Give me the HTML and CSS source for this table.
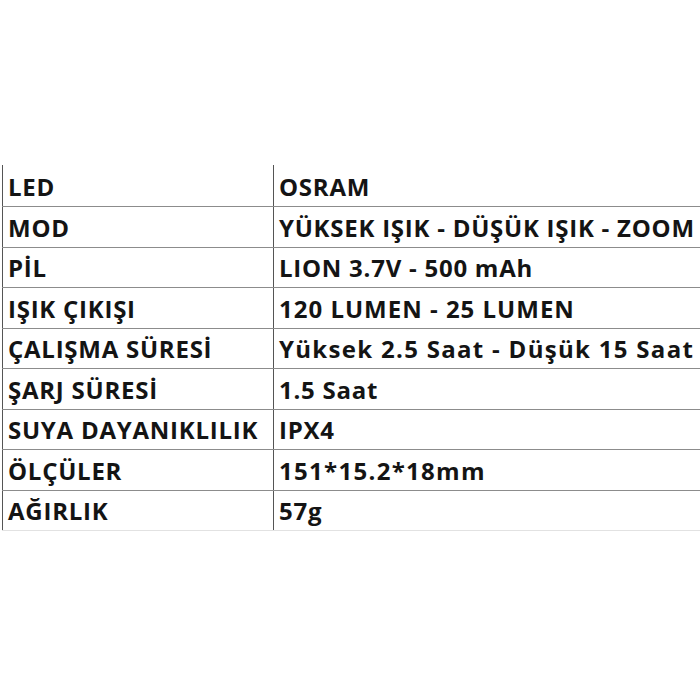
FILE: index.html
```html
<!DOCTYPE html>
<html>
<head>
<meta charset="utf-8">
<link rel="stylesheet" href="styles.css">
</head>
<body>
<table class="spec">
<tr><td class="k">LED</td><td class="v">OSRAM</td></tr>
<tr><td class="k">MOD</td><td class="v">YÜKSEK IŞIK - DÜŞÜK IŞIK - ZOOM</td></tr>
<tr><td class="k">PİL</td><td class="v">LION 3.7V - 500 mAh</td></tr>
<tr><td class="k">IŞIK ÇIKIŞI</td><td class="v wide">120 LUMEN - 25 LUMEN</td></tr>
<tr><td class="k">ÇALIŞMA SÜRESİ</td><td class="v lower">Yüksek 2.5 Saat - Düşük 15 Saat</td></tr>
<tr><td class="k">ŞARJ SÜRESİ</td><td class="v">1.5 Saat</td></tr>
<tr><td class="k">SUYA DAYANIKLILIK</td><td class="v">IPX4</td></tr>
<tr><td class="k">ÖLÇÜLER</td><td class="v lower">151*15.2*18mm</td></tr>
<tr><td class="k">AĞIRLIK</td><td class="v">57g</td></tr>
</table>
</body>
</html>
```
FILE: styles.css
```css
html, body {
  margin: 0;
  padding: 0;
  background: #fff;
}
.spec {
  margin-top: 165px;
  margin-left: 2px;
  width: 698px;
  border-collapse: collapse;
  font-family: "Open Sans", sans-serif;
  font-weight: 700;
  font-size: 24px;
  letter-spacing: 0.75px;
  color: #141414;
}
.spec td {
  height: 37.5px;
  padding: 2px 0 0 0;
  border-bottom: 1px solid #8c8c8c;
  white-space: nowrap;
  vertical-align: middle;
  line-height: 1;
}
.spec tr:first-child td {
  height: 39px;
}
.spec tr:last-child td {
  border-bottom: 1px solid #e2e2e2;
}
.spec td.k {
  width: 265px;
  padding-left: 5px;
  border-left: 1px solid #555;
  border-right: 1px solid #555;
}
.spec td.v {
  padding-left: 5px;
}
.spec td.v.wide {
  letter-spacing: 1px;
}
.spec td.v.lower {
  letter-spacing: 1.3px;
}
```
